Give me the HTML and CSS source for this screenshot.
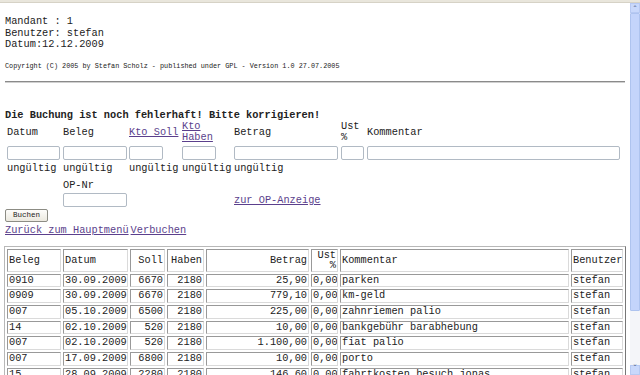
FILE: index.html
```html
<!DOCTYPE html>
<html lang="de">
 <head>
  <title>Buchung erfassen</title>
  <meta charset="utf-8"/>
  <link rel="stylesheet" href="styles.css">
 </head>
 <body>
	<div class="chrome"></div>
	<div id="frame">
		<div id="page">
			<div class="info">
				Mandant : 1<br/>
				Benutzer: stefan<br/>
				Datum:12.12.2009
			</div>
			<p class="copy">Copyright (C) 2005 by Stefan Scholz - published under GPL - Version 1.0 27.07.2005</p>
			<hr/>

			<p class="error">Die Buchung ist noch fehlerhaft! Bitte korrigieren!</p>

			<!-- Eingabemaske -->
			<div class="form">
				<span class="lbl">Datum</span>
				<span class="lbl">Beleg</span>
				<span class="lbl"><a href="#">Kto Soll</a></span>
				<span class="lbl"><a href="#">Kto Haben</a></span>
				<span class="lbl">Betrag</span>
				<span class="lbl">Ust %</span>
				<span class="lbl">Kommentar</span>

				<input class="in w53" type="text"/>
				<input class="in w64" type="text"/>
				<input class="in w34" type="text"/>
				<input class="in w34" type="text"/>
				<input class="in w104" type="text"/>
				<input class="in w23" type="text"/>
				<input class="in w253" type="text"/>

				<span class="msg">ungültig</span>
				<span class="msg">ungültig</span>
				<span class="msg">ungültig</span>
				<span class="msg">ungültig</span>
				<span class="msg">ungültig</span>
				<span class="msg"></span>
				<span class="msg"></span>

				<span class="op"></span>
				<span class="op">OP-Nr</span>
				<span class="op"></span>
				<span class="op"></span>
				<span class="op"></span>
				<span class="op"></span>
				<span class="op"></span>

				<span class="oprow"></span>
				<input class="in w64 oprow" type="text"/>
				<span class="oprow"></span>
				<span class="oprow"></span>
				<span class="oprow"><a href="#">zur OP-Anzeige</a></span>
				<span class="oprow"></span>
				<span class="oprow"></span>
			</div>

			<input id="buchen" type="button" value="Buchen"/>
			<p class="links"><a href="#">Zurück zum Hauptmenü</a><a class="next" href="#">Verbuchen</a></p>

			<!-- offene Buchungen -->
			<table class="list">
				<colgroup>
					<col style="width:54px"/>
					<col style="width:65px"/>
					<col style="width:35px"/>
					<col style="width:37px"/>
					<col style="width:103px"/>
					<col style="width:27px"/>
					<col style="width:229px"/>
					<col/>
				</colgroup>
				<tr>
					<th>Beleg</th><th>Datum</th><th class="r">Soll</th><th class="r">Haben</th>
					<th class="r">Betrag</th><th class="r">Ust<br/>%</th><th>Kommentar</th><th class="last">Benutzer</th>
				</tr>
				<tr><td>0910</td><td>30.09.2009</td><td class="r">6670</td><td class="r">2180</td><td class="r">25,90</td><td class="r">0,00</td><td>parken</td><td class="last">stefan</td></tr>
				<tr><td>0909</td><td>30.09.2009</td><td class="r">6670</td><td class="r">2180</td><td class="r">779,10</td><td class="r">0,00</td><td>km-geld</td><td class="last">stefan</td></tr>
				<tr><td>007</td><td>05.10.2009</td><td class="r">6500</td><td class="r">2180</td><td class="r">225,00</td><td class="r">0,00</td><td>zahnriemen palio</td><td class="last">stefan</td></tr>
				<tr><td>14</td><td>02.10.2009</td><td class="r">520</td><td class="r">2180</td><td class="r">10,00</td><td class="r">0,00</td><td>bankgebühr barabhebung</td><td class="last">stefan</td></tr>
				<tr><td>007</td><td>02.10.2009</td><td class="r">520</td><td class="r">2180</td><td class="r">1.100,00</td><td class="r">0,00</td><td>fiat palio</td><td class="last">stefan</td></tr>
				<tr><td>007</td><td>17.09.2009</td><td class="r">6800</td><td class="r">2180</td><td class="r">10,00</td><td class="r">0,00</td><td>porto</td><td class="last">stefan</td></tr>
				<tr><td>15</td><td>28.09.2009</td><td class="r">2280</td><td class="r">2180</td><td class="r">146,60</td><td class="r">0,00</td><td>fahrtkosten besuch jonas</td><td class="last">stefan</td></tr>
			</table>
		</div>

		<!-- Bildlaufleiste -->
		<div class="scroll">
			<span class="arrow">&#710;</span>
			<span class="thumb"></span>
			<span class="track"></span>
			<span class="arrow dn">&#711;</span>
		</div>
	</div>
 </body>
</html>
```
FILE: styles.css
```css
*{margin:0; padding:0; box-sizing:border-box;}
html, body{height:375px; overflow:hidden; background:#fff;}
body{font-family:"Liberation Mono", "DejaVu Sans Mono", monospace; font-size:10.3px; color:#222;}
a{color:#5b3f8c;}

.chrome{height:3px; background:#e9e6dc; border-bottom:1px solid #d6d2c6;}
#frame{display:flex; height:372px;}
#page{width:630px; padding-left:5px; overflow:hidden;}

.info{padding-top:13px; line-height:11.5px;}
.copy{font-size:6.8px; line-height:9px; margin-top:11px;}
hr{width:620px; margin-top:10px; border:none; border-top:1px solid #8a8a8a; border-bottom:1px solid #d0d0d0;}

.error{font-weight:bold; line-height:12px; margin-top:26px;}

.form{display:grid; grid-template-columns:56px 66px 53px 52px 107px 26px 253px; margin-left:2px; align-items:center;}
.lbl{height:23px; display:flex; align-items:center; line-height:11px;}
.lbl a{display:block;}
.in{height:14px; margin-top:2px; border:1px solid #b1bac4; border-radius:2px; background:#fff;}
.w53{width:53px;} .w64{width:64px;} .w34{width:34px;} .w104{width:104px;} .w23{width:23px;} .w253{width:253px;}
.msg{line-height:12px; margin-top:2px; height:12px;}
.op{line-height:12px; height:12px; margin-top:5px;}
.oprow{margin-top:2px; height:14px; line-height:14px;}

#buchen{display:block; width:43px; height:13px; margin-top:2px; font-family:"Liberation Mono", monospace; font-size:7.5px; color:#222;
border:1px solid #8c8c84; border-radius:2px; background:linear-gradient(#fdfdfb, #ece9df);}

.links{line-height:12px; margin-top:2px;}
.links .next{margin-left:2px;}

.list{width:622px; margin-top:10px; margin-left:-1px; table-layout:fixed; border:1px solid #b8b8b8; border-right-color:#777; border-bottom-color:#777; border-spacing:2px;}
.list th, .list td{border:1px solid #999; border-right-color:#dadada; border-bottom-color:#dadada; padding:0 1px; line-height:11.67px; font-weight:normal; text-align:left; white-space:nowrap; overflow:hidden;}
.list th{line-height:10.5px;}
.list .r{text-align:right;}
.list .last{padding-right:0; overflow:visible;}

.scroll{width:10px; display:flex; flex-direction:column; background:#f4f5f9;}
.arrow{height:10px; background:#c9d8fb; border:1px solid #b7c9f2; color:#4d6185; font-size:9px; line-height:12px; text-align:center; font-family:"DejaVu Sans", sans-serif;}
.arrow.dn{line-height:6px;}
.thumb{height:298px; background:#c4d4fb; border:1px solid #aec3ef; border-radius:1px;}
.track{flex:1;}
```
